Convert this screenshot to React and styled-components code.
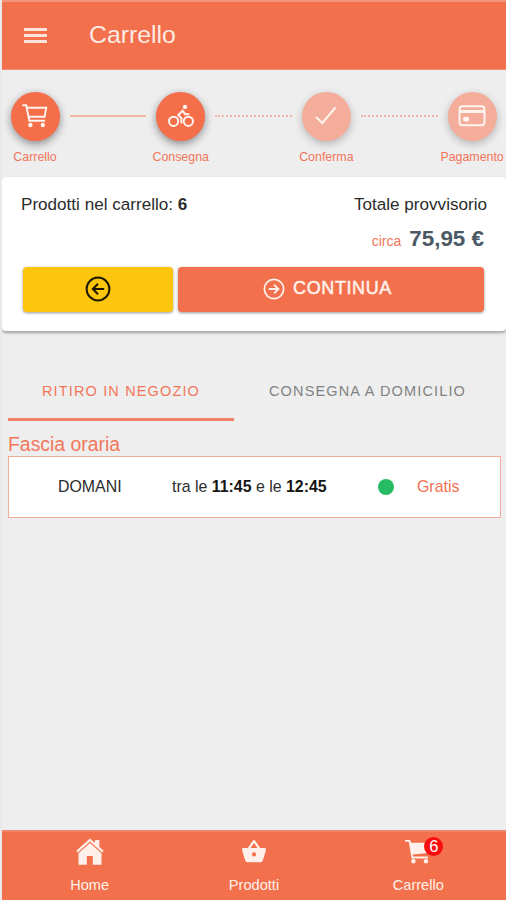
import styled, { createGlobalStyle, css } from "styled-components";

const GlobalStyle = createGlobalStyle`
  * {
    box-sizing: border-box;
  }
  body {
    margin: 0;
    background: #eeeeee;
    font-family: "Liberation Sans", Arial, sans-serif;
    color: #2b2b2b;
  }
`;

const AppBox = styled.div`
  display: flex;
  flex-direction: column;
  width: 100%;
  height: 100vh;
  overflow: hidden;
  background: #eeeeee;
  border-left: 2px solid #e9e9eb;
`;

const Header = styled.header`
  display: flex;
  align-items: center;
  flex: none;
  height: 70px;
  padding-left: 22px;
  gap: 42px;
  background: #f2704b;
  border-top: 2px solid #f3957d;
  border-bottom: 1px solid #ee8c70;
`;

const MenuButton = styled.button`
  display: flex;
  flex-direction: column;
  gap: 3px;
  width: 23px;
  padding: 0;
  border: none;
  background: none;
`;

const MenuLine = styled.span`
  height: 3px;
  background: #fde3db;
`;

const Title = styled.h1`
  margin: 0 0 2px;
  font-size: 24.8px;
  line-height: 28px;
  font-weight: 400;
  color: #fdeae4;
`;

const Steps = styled.nav`
  display: flex;
  align-items: flex-start;
  flex: none;
  height: 107px;
  padding: 21.5px 0 0 8.5px;
`;

const Step = styled.div`
  display: flex;
  flex-direction: column;
  align-items: center;
  flex: none;
  width: 49px;
`;

const StepCircle = styled.div`
  display: flex;
  align-items: center;
  justify-content: center;
  width: 49px;
  height: 49px;
  border-radius: 50%;
  color: #fff3ef;
  background: ${(props) => (props.$active ? "#f36e49" : "#f3ad9a")};
  box-shadow: ${(props) =>
    props.$active
      ? "0 3px 8px rgba(0, 0, 0, 0.42)"
      : "0 3px 8px rgba(0, 0, 0, 0.24)"};
`;

const StepLabel = styled.span`
  margin-top: 9.5px;
  font-size: 12.4px;
  line-height: 14px;
  white-space: nowrap;
  color: #f0755a;
`;

const StepLine = styled.div`
  flex: none;
  width: 76.7px;
  margin: 23.5px 10px 0;
  border-top: 2px ${(props) => (props.$done ? "solid" : "dotted")} #f5b5a4;
`;

const Summary = styled.section`
  flex: none;
  height: 154px;
  padding: 18px 19px 0 19px;
  background: #ffffff;
  border-radius: 4px;
  box-shadow: 0 2px 3px rgba(0, 0, 0, 0.32);
`;

const SummaryRow = styled.div`
  display: flex;
  justify-content: space-between;
  font-size: 17.1px;
  line-height: 20px;
`;

const PriceRow = styled.div`
  display: flex;
  justify-content: flex-end;
  align-items: baseline;
  gap: 8px;
  height: 26px;
  margin: 11px 3px 0 0;
  line-height: 26px;
`;

const Circa = styled.span`
  font-size: 14px;
  color: #f2765a;
`;

const Price = styled.span`
  font-size: 22.4px;
  font-weight: 700;
  color: #4c5a66;
`;

const ButtonRow = styled.div`
  display: flex;
  gap: 5px;
  margin: 15px 3px 0 2px;
`;

const Button = styled.button`
  display: flex;
  align-items: center;
  justify-content: center;
  gap: 8px;
  height: 45px;
  padding: 0 0 2px;
  border: none;
  border-radius: 4px;
  font-family: inherit;
  font-size: 18px;
  letter-spacing: 0.6px;
  box-shadow: 0 1px 3px rgba(0, 0, 0, 0.42);
  ${(props) =>
    props.$back
      ? css`
          flex: none;
          width: 150px;
          color: #1d1800;
          background: #fdc50b;
        `
      : css`
          flex: 1;
          padding-right: 7px;
          color: #fff0eb;
          background: #f2704b;
          -webkit-text-stroke: 0.5px #fff0eb;
        `}
`;

const Tabs = styled.div`
  display: flex;
  flex: none;
  margin-top: 30px;
  padding-left: 6px;
`;

const Tab = styled.div`
  display: flex;
  align-items: center;
  justify-content: center;
  flex: none;
  width: ${(props) => props.$width}px;
  height: 60px;
  padding-top: 2px;
  font-size: 14.5px;
  letter-spacing: 1.15px;
  white-space: nowrap;
  color: ${(props) => (props.$active ? "#f2775a" : "#828282")};
  border-bottom: 3px solid
    ${(props) => (props.$active ? "#f08066" : "transparent")};
`;

const Slots = styled.section`
  flex: 1;
  padding: 12px 5px 0 6px;
`;

const SlotsTitle = styled.h2`
  margin: 0;
  font-size: 19.4px;
  line-height: 23px;
  font-weight: 400;
  color: #f2775a;
`;

const Slot = styled.div`
  display: grid;
  grid-template-columns: 163px 206px 1fr;
  align-items: center;
  height: 62px;
  font-size: 15.9px;
  background: #ffffff;
  border: 1px solid #f3ab99;
  b {
    color: #151515;
  }
`;

const SlotDay = styled.span`
  padding-left: 49px;
`;

const SlotCost = styled.span`
  display: flex;
  align-items: center;
  gap: 23px;
  color: #f2704f;
`;

const Dot = styled.span`
  width: 16px;
  height: 16px;
  border-radius: 50%;
  background: #27bb63;
`;

const BottomBar = styled.nav`
  display: flex;
  justify-content: center;
  flex: none;
  height: 70px;
  background: #f2704b;
  border-top: 2px solid #ef8467;
`;

const BottomItem = styled.div`
  display: flex;
  flex-direction: column;
  align-items: center;
  width: 164.3px;
  padding-top: 6px;
  font-size: 14.6px;
  line-height: 17px;
  color: #fff0eb;
`;

const IconBox = styled.div`
  position: relative;
  display: flex;
  width: 28px;
  height: 28px;
  margin-bottom: 11px;
`;

const Badge = styled.span`
  position: absolute;
  top: -1px;
  left: 20px;
  width: 19px;
  height: 19px;
  border-radius: 50%;
  font-size: 16.5px;
  line-height: 19px;
  text-align: center;
  color: #ffffff;
  background: #fb0d0d;
`;

function CartOutline() {
  return (
    <svg width="26" height="26" viewBox="0 0 26 26" fill="none" stroke="currentColor" strokeWidth="1.9">
      <path d="M0.3 2.2H4.2L7.3 17.8H23" />
      <path d="M4.8 4.8H24.2L22.6 13.8H6.6" />
      <circle cx="8.4" cy="22" r="2.2" fill="currentColor" stroke="none" />
      <circle cx="20.8" cy="22" r="2.2" fill="currentColor" stroke="none" />
    </svg>
  );
}

function Bike() {
  return (
    <svg width="26" height="24" viewBox="0 0 26 24" fill="none" stroke="currentColor" strokeWidth="2">
      <circle cx="5.6" cy="17.3" r="4.6" />
      <circle cx="20.4" cy="17.3" r="4.6" />
      <circle cx="17" cy="2.9" r="2.2" fill="currentColor" stroke="none" />
      <path d="M13.4 19.5V14.2L10.3 11L14.6 6.8L17.2 10.2H21.3" />
    </svg>
  );
}

function Check() {
  return (
    <svg width="22" height="20" viewBox="0 0 22 20" fill="none" stroke="currentColor" strokeWidth="2">
      <path d="M1 11L7.3 17L20.5 1.5" />
    </svg>
  );
}

function Card() {
  return (
    <svg width="28" height="22" viewBox="0 0 28 22" fill="none" stroke="currentColor" strokeWidth="2">
      <rect x="1.5" y="1.3" width="25" height="19" rx="3" />
      <path d="M2 6.5H26" strokeWidth="3" />
      <rect x="5" y="11.8" width="6.2" height="4.8" rx="2.2" fill="currentColor" stroke="none" />
    </svg>
  );
}

function ArrowCircle({ size, back }) {
  return (
    <svg width={size} height={size} viewBox="0 0 26 26" fill="none" stroke="currentColor" strokeWidth="2">
      <circle cx="13" cy="13" r="11.4" />
      {back ? (
        <path d="M19.2 13H8M13 7.8L7.8 13L13 18.2" />
      ) : (
        <path d="M6.8 13H18M13 7.8L18.2 13L13 18.2" strokeWidth="2.3" />
      )}
    </svg>
  );
}

function House() {
  return (
    <svg width="28" height="28" viewBox="0 0 28 28" fill="currentColor">
      <path d="M14 0.5L0.3 12.8L1.7 14.4L14 3.6L26.3 14.4L27.7 12.8L23.4 8.9V2H19V4.9Z" />
      <path d="M14 5L2.5 15.2V26.8H10.8V18H16.8V26.8H25.5V15.2Z" />
    </svg>
  );
}

function Basket() {
  return (
    <svg width="28" height="28" viewBox="0 0 28 28" fill="currentColor">
      <path
        fillRule="evenodd"
        d="M2.3 10H7.8L12.8 2.7Q14 1.2 15.2 2.7L20.2 10H25.7V13L22.8 22.5Q22.3 24.2 20.6 24.2H7.4Q5.7 24.2 5.2 22.5L2.3 13ZM10.5 10H17.5L14 5ZM14 14.3A2.1 2.1 0 1 0 14 18.5A2.1 2.1 0 1 0 14 14.3Z"
      />
    </svg>
  );
}

function CartFull() {
  return (
    <svg width="28" height="28" viewBox="0 0 28 28" fill="currentColor">
      <path d="M1 2H6.2L7 4.8H25V15L8.6 16.6L9.1 18.6H24V20.4H7.6L4.7 3.8H1Z" />
      <circle cx="9.4" cy="23.3" r="2.2" />
      <circle cx="22" cy="23.3" r="2.2" />
    </svg>
  );
}

const steps = [
  { label: "Carrello", icon: <CartOutline />, active: true },
  { label: "Consegna", icon: <Bike />, active: true, done: true },
  { label: "Conferma", icon: <Check /> },
  { label: "Pagamento", icon: <Card /> },
];

const links = [
  { label: "Home", icon: <House /> },
  { label: "Prodotti", icon: <Basket /> },
  { label: "Carrello", icon: <CartFull />, badge: 6 },
];

function App() {
  return (
    <>
      <GlobalStyle />
      <AppBox>
        <Header>
          <MenuButton aria-label="Menu">
            <MenuLine />
            <MenuLine />
            <MenuLine />
          </MenuButton>
          <Title>Carrello</Title>
        </Header>
        <Steps>
          {steps.map((step, i) => [
            i > 0 && <StepLine key={`line-${step.label}`} $done={step.done} />,
            <Step key={step.label}>
              <StepCircle $active={step.active}>{step.icon}</StepCircle>
              <StepLabel>{step.label}</StepLabel>
            </Step>,
          ])}
        </Steps>
        <Summary>
          <SummaryRow>
            <span>
              Prodotti nel carrello: <b>6</b>
            </span>
            <span>Totale provvisorio</span>
          </SummaryRow>
          <PriceRow>
            <Circa>circa</Circa>
            <Price>75,95 €</Price>
          </PriceRow>
          <ButtonRow>
            <Button $back aria-label="Indietro">
              <ArrowCircle size={26} back />
            </Button>
            <Button>
              <ArrowCircle size={22} />
              CONTINUA
            </Button>
          </ButtonRow>
        </Summary>
        <Tabs>
          <Tab $active $width={226}>
            RITIRO IN NEGOZIO
          </Tab>
          <Tab $width={267}>CONSEGNA A DOMICILIO</Tab>
        </Tabs>
        <Slots>
          <SlotsTitle>Fascia oraria</SlotsTitle>
          <Slot>
            <SlotDay>DOMANI</SlotDay>
            <span>
              tra le <b>11:45</b> e le <b>12:45</b>
            </span>
            <SlotCost>
              <Dot />
              Gratis
            </SlotCost>
          </Slot>
        </Slots>
        <BottomBar>
          {links.map((link) => (
            <BottomItem key={link.label}>
              <IconBox>
                {link.icon}
                {link.badge && <Badge>{link.badge}</Badge>}
              </IconBox>
              {link.label}
            </BottomItem>
          ))}
        </BottomBar>
      </AppBox>
    </>
  );
}

export default App;
